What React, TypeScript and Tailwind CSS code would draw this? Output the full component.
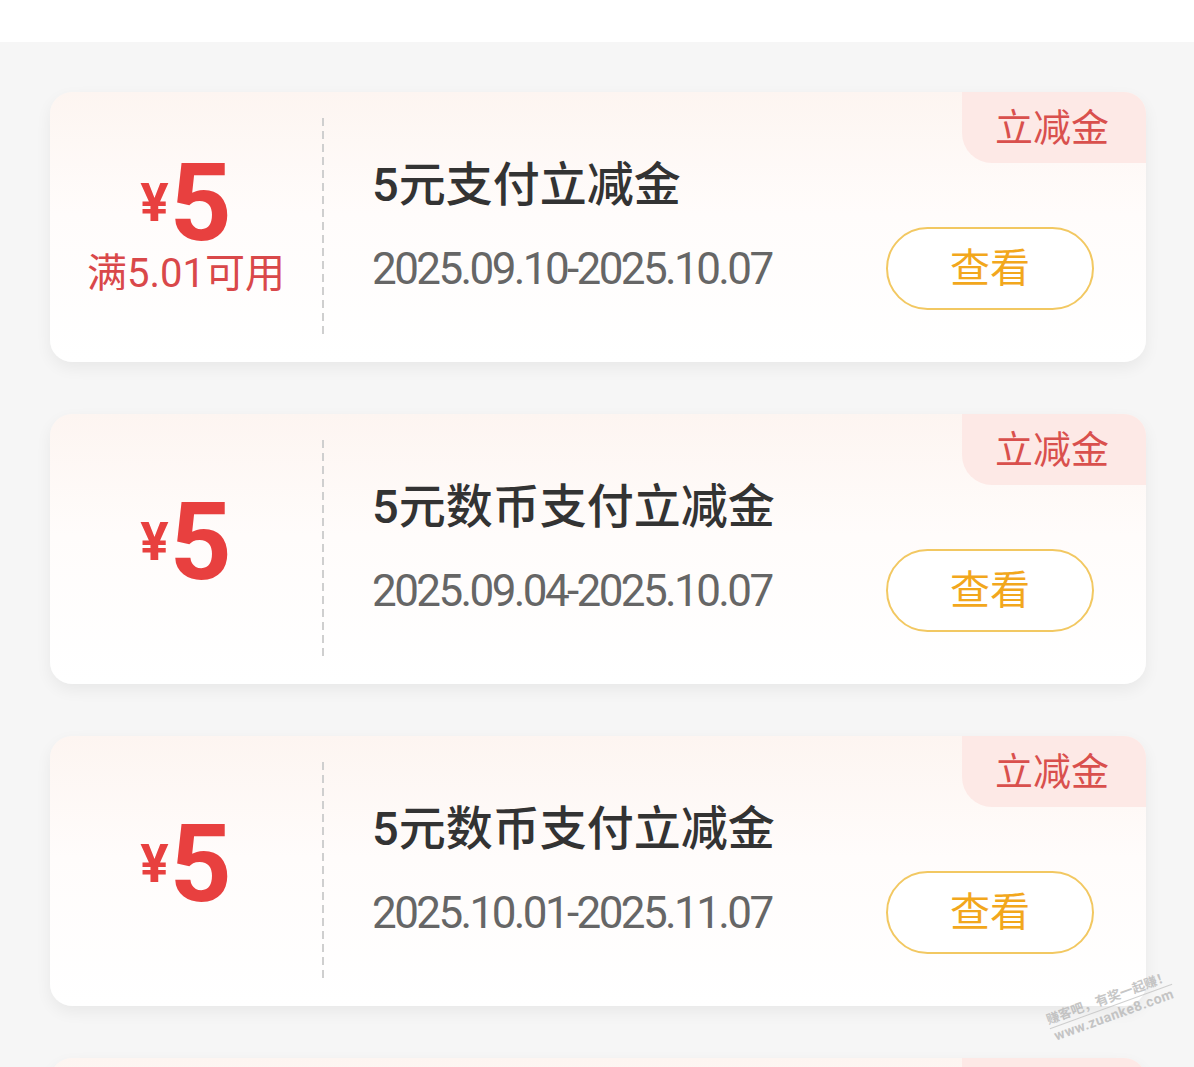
import React from 'react';

interface Coupon {
  id: number;
  amount: string;
  condition?: string;
  title: string;
  period: string;
}

const COUPONS: Coupon[] = [
  { id: 1, amount: '5', condition: '满5.01可用', title: '5元支付立减金', period: '2025.09.10-2025.10.07' },
  { id: 2, amount: '5', title: '5元数币支付立减金', period: '2025.09.04-2025.10.07' },
  { id: 3, amount: '5', title: '5元数币支付立减金', period: '2025.10.01-2025.11.07' },
  { id: 4, amount: '5', title: '5元数币支付立减金', period: '2025.10.01-2025.11.07' },
];

const FONT = "font-['Roboto','Noto_Sans_CJK_SC',sans-serif]";

const CouponCard: React.FC<{ coupon: Coupon }> = ({ coupon }) => (
  <div className="relative flex h-[270px] shrink-0 overflow-hidden rounded-[22px] bg-[linear-gradient(180deg,#fdf5f1_0%,#fffcfb_45%,#ffffff_100%)] shadow-[0_6px_16px_rgba(0,0,0,0.06)]">
    {/* Type tag */}
    <div className="absolute right-0 top-0 flex h-[71px] w-[184px] items-center justify-center rounded-bl-[30px] bg-[#fde9e6]">
      <span className="-ml-[4px] text-[38px] leading-none text-[#d9504d]">立减金</span>
    </div>

    {/* Amount */}
    <div className={`flex w-[272px] shrink-0 flex-col items-center justify-center ${coupon.condition ? 'pb-[6px]' : 'pb-[14px]'}`}>
      <div className="flex items-end text-[#e8403f]">
        <span className="mb-[21px] text-[53px] font-bold leading-none">¥</span>
        <span className="ml-[1px] text-[108px] font-bold leading-[96px]">{coupon.amount}</span>
      </div>
      {coupon.condition && (
        <p className="mt-[3px] text-[40px] leading-[40px] text-[#d9484a]">{coupon.condition}</p>
      )}
    </div>

    {/* Dashed divider */}
    <div className="my-[26px] w-[2px] shrink-0 bg-[linear-gradient(180deg,#cfcfcf_62%,transparent_62%)] bg-[length:2px_13px] bg-repeat-y" />

    {/* Info */}
    <div className="flex flex-1 flex-col pl-[48px] pr-[52px] pt-[65px]">
      <h3 className="text-[47px] font-medium leading-[56px] text-[#333333]">{coupon.title}</h3>
      <div className="mt-[14px] flex h-[83px] items-center justify-between">
        <span className="text-[44px] leading-none tracking-[-2.6px] text-[#666666]">{coupon.period}</span>
        <button className="flex h-[83px] w-[208px] items-center justify-center rounded-full border-2 border-[#f2c862] bg-white text-[40px] leading-none text-[#f2a71c]">
          查看
        </button>
      </div>
    </div>
  </div>
);

export default function App() {
  return (
    <div className={`relative min-h-screen w-[1194px] overflow-hidden bg-[#f6f6f6] ${FONT}`}>
      <div className="h-[42px] bg-white" />

      <div className="flex flex-col gap-[52px] pb-10 pl-[50px] pr-[48px] pt-[50px]">
        {COUPONS.map((c) => (
          <CouponCard key={c.id} coupon={c} />
        ))}
      </div>

      {/* Forum watermark */}
      <div className="pointer-events-none absolute left-[1046px] top-[990px] flex -rotate-[20deg] flex-col items-center text-[#b8b8b8] opacity-80">
        <span className="text-[13px] font-bold leading-[16px]">赚客吧，有奖一起赚！</span>
        <span className="w-full border-t border-[#c4c4c4]" />
        <span className="text-[14px] font-bold leading-[16px] tracking-[0.5px]">www.zuanke8.com</span>
      </div>
    </div>
  );
}
